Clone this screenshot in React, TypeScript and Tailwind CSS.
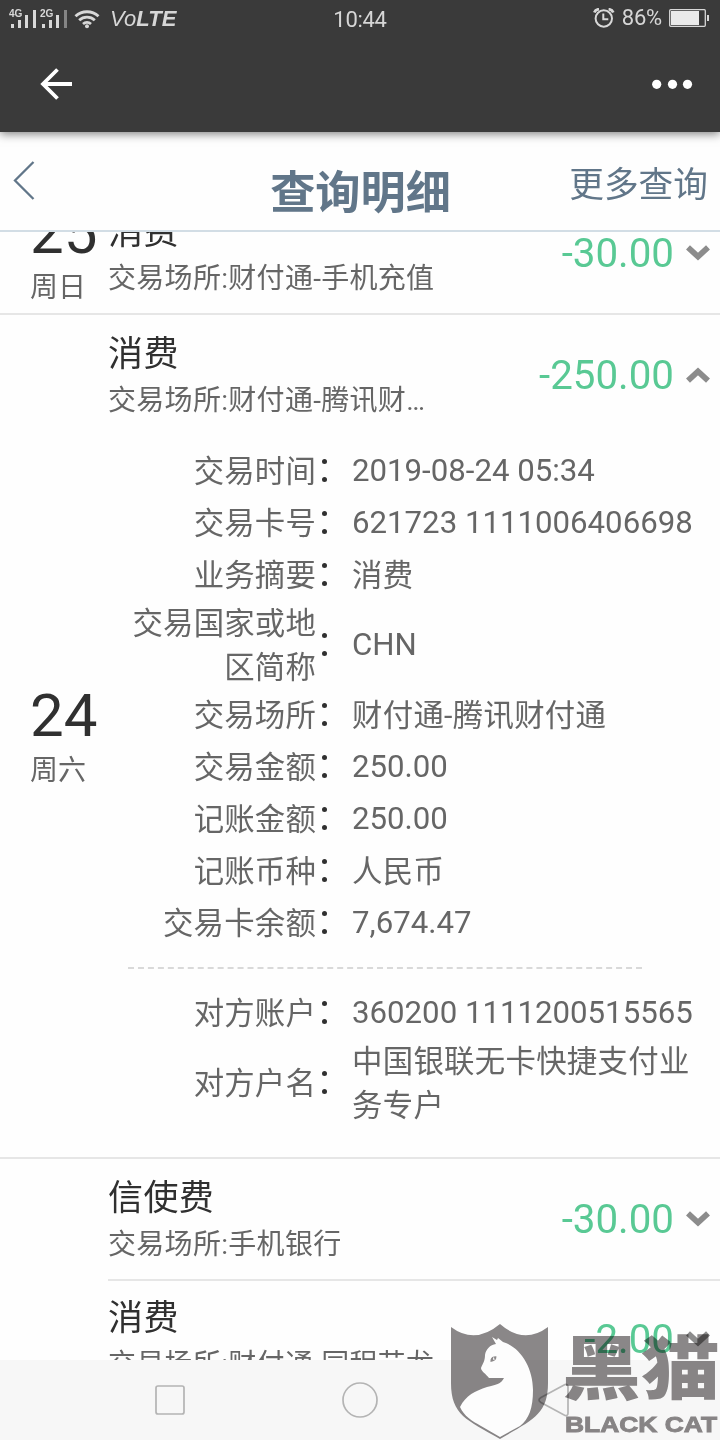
import React from "react";

type Detail = { label: string; value: string };

const tradeDetails: Detail[] = [
  { label: "交易时间", value: "2019-08-24 05:34" },
  { label: "交易卡号", value: "621723 1111006406698" },
  { label: "业务摘要", value: "消费" },
  { label: "交易国家或地区简称", value: "CHN" },
  { label: "交易场所", value: "财付通-腾讯财付通" },
  { label: "交易金额", value: "250.00" },
  { label: "记账金额", value: "250.00" },
  { label: "记账币种", value: "人民币" },
  { label: "交易卡余额", value: "7,674.47" },
];

const partyDetails: Detail[] = [
  { label: "对方账户", value: "360200 1111200515565" },
  { label: "对方户名", value: "中国银联无卡快捷支付业务专户" },
];

function Chevron({ up = false }: { up?: boolean }) {
  return (
    <svg width="24" height="16" viewBox="0 0 24 16" fill="none" stroke="#8c8c8c" strokeWidth="5.8">
      <path d={up ? "M2 13.6 12 4.4l10 9.2" : "M2 2.4 12 11.6l10-9.2"} />
    </svg>
  );
}

function Signal({ label, weak = false }: { label: string; weak?: boolean }) {
  return (
    <svg width="29" height="20" viewBox="0 0 29 20" fill="#d8d8d8">
      <text x="0" y="8" fontSize="10.4" fontWeight="700" fontFamily="Liberation Sans, sans-serif" textLength="13.5" lengthAdjust="spacingAndGlyphs">
        {label}
      </text>
      <rect x="2" y="15" width="3" height="4" />
      <rect x="9" y="11" width="3" height="8" />
      <rect x="16" y="6" width="3" height="13" />
      <rect x="24" y="1" width="3" height="18" fill={weak ? "#858585" : "#d8d8d8"} />
    </svg>
  );
}

function StatusBar() {
  return (
    <div className="grid h-9 grid-cols-[1fr_auto_1fr] items-center text-[22px] leading-8 text-[#d6d6d6]">
      <div className="flex items-center pl-[9px] pt-[2px]">
        <div className="flex gap-[2px]">
          <Signal label="4G" />
          <Signal label="2G" weak />
        </div>
        <svg className="ml-[5px]" width="27" height="20" viewBox="0 0 27 20" fill="none" stroke="#d8d8d8" strokeWidth="2.9">
          <path d="M1.5 7.2a17 17 0 0 1 23 0M5.2 11.2a11.5 11.5 0 0 1 15.6 0M9 15a6.2 6.2 0 0 1 8 0" />
          <circle cx="13" cy="17.2" r="2" fill="#d8d8d8" stroke="none" />
        </svg>
        <div className="ml-[9px] font-['Liberation_Sans',sans-serif] text-[22px] italic tracking-[0.1px]">
          Vo<span className="font-bold">LTE</span>
        </div>
      </div>
      <div className="pt-[3px] tracking-[-0.3px]">10:44</div>
      <div className="flex items-center justify-end pr-[11px]">
        <svg width="22" height="20" viewBox="0 0 22 20" fill="none" stroke="#d8d8d8" strokeWidth="2">
          <circle cx="10.8" cy="10.5" r="8.2" />
          <path d="M10.3 5.5v5.7h5" />
          <path d="M1.3 4.5Q2.5 1.5 6 1.2M20.3 4.5Q19 1.5 15.6 1.2" strokeWidth="2.8" />
        </svg>
        <span className="ml-[7px] pb-px tracking-[-0.2px]">86%</span>
        <svg className="ml-[7px]" width="40" height="18" viewBox="0 0 40 18">
          <rect x="0.7" y="0.7" width="35.6" height="16.6" rx="1" fill="none" stroke="#d8d8d8" strokeWidth="1.3" />
          <rect x="2" y="2" width="28" height="14" fill="#eaeaea" />
          <rect x="38" y="6" width="2" height="6" fill="#d8d8d8" />
        </svg>
      </div>
    </div>
  );
}

function Row({ title, place, amount, open = false }: { title: string; place: string; amount: string; open?: boolean }) {
  return (
    <div className="flex h-[120px] shrink-0 items-center pr-[10px]">
      <div className="w-[329px] shrink-0 pt-[6px]">
        <div className="h-[46px] text-[35px] leading-[46px] tracking-[0.4px] text-[#303030]">{title}</div>
        <div className="h-[46px] truncate text-[28px] leading-[46px] tracking-[0.3px] text-[#666]">{place}</div>
      </div>
      <div className="flex-1 pt-0.5 text-right text-[40.3px] leading-[48px] text-[#59c994]">{amount}</div>
      <div className="ml-[12px]">
        <Chevron up={open} />
      </div>
    </div>
  );
}

function DateCell({ day, week }: { day: string; week: string }) {
  return (
    <div className="flex w-[108px] shrink-0 flex-col justify-center pl-[30px] pt-[8px]">
      <div className="text-[60px] leading-[60px] text-[#303030]">{day}</div>
      <div className="pt-[2px] text-[28px] leading-[46px] text-[#666]">{week}</div>
    </div>
  );
}

function DetailRow({ label, value }: Detail) {
  const latin = /^[\x20-\x7e]+$/.test(value);
  return (
    <div className="flex min-h-[52px] items-center text-[30.4px] leading-[44px] text-[#666]">
      <div className="-mb-[2px] w-[208px] shrink-0 pl-[20px] pt-[2px] text-right tracking-[0.2px]">{label}</div>
      <div className="flex w-[36px] shrink-0 flex-col items-start gap-[13px] pl-[6px]">
        <span className="size-[5px] rounded-full bg-[#303030]" />
        <span className="size-[5px] rounded-full bg-[#303030]" />
      </div>
      <div className={latin ? "-mb-px w-[348px] pt-px text-[31.2px]" : "-mb-[2px] w-[348px] pt-[2px] tracking-[0.3px]"}>
        {value}
      </div>
    </div>
  );
}

function Watermark() {
  return (
    <div className="pointer-events-none absolute bottom-0 right-0 h-[116px] w-[270px]">
      <svg className="mix-blend-multiply" width="270" height="116" viewBox="0 0 270 116" fill="#8b8889">
        <path d="M1 3Q25 21 50 0Q74 21 98 3V59C98 91 82 96 50 115C17 96 1 91 1 59Z" />
        <g transform="translate(0 6) scale(1 0.91)">
          <text x="112" y="70" fontSize="76" fontWeight="900" fontFamily="Noto Sans CJK SC, sans-serif" textLength="158" lengthAdjust="spacingAndGlyphs">
            黑猫
          </text>
        </g>
        <text x="115" y="107.500" fontSize="22.5" fontWeight="700" fontFamily="Liberation Sans, sans-serif" stroke="#8b8889" strokeWidth="0.9" textLength="152" lengthAdjust="spacingAndGlyphs">
          BLACK CAT
        </text>
      </svg>
      <svg className="absolute inset-0" width="270" height="116" viewBox="0 0 270 116">
        <path
          fill="#fdfdfd"
          d="M42 13L47 16L48 14L53 18C70 23 83 43 83 66C83 84 79 95 70 102L50 113L31 102C22 97 14 92 10 83C16 71 25 67 37 63C46 61 51 60 54 54H39C36 50 31 47 31 44C33 39 35 37 35 31C36 25 40 21 46 20Z"
        />
        <path d="M40.500 38Q40 33 44 32.500Q46.500 32 46.500 32.500Q46.500 37 40.500 38Z" fill="#8b8889" />
        <path d="M43.500 33.500L44 36" stroke="#fdfdfd" strokeWidth="1.200" />
      </svg>
    </div>
  );
}

export default function App() {
  return (
    <div className="relative flex h-[1440px] w-[720px] flex-col overflow-hidden bg-[#fefefe] font-[Roboto,'Noto_Sans_CJK_SC',sans-serif]">
      <header className="z-10 h-[132px] shrink-0 bg-[#3a3a3a] shadow-[0_2px_9px_rgba(0,0,0,0.5)]">
        <StatusBar />
        <div className="flex h-24 items-center justify-between pl-10 pr-[26px]">
          <svg width="33" height="34" viewBox="0 0 33 34" fill="none" stroke="#fff" strokeWidth="3.8">
            <path d="M17.5 2.5 3 17l14.500 14.500M3 17h29" />
          </svg>
          <svg width="42" height="10" viewBox="0 0 42 10" fill="#fff">
            <circle cx="4.700" cy="5.300" r="4.600" />
            <circle cx="20.500" cy="5.300" r="4.600" />
            <circle cx="35.500" cy="5.300" r="4.600" />
          </svg>
        </div>
      </header>

      <div className="grid h-[100px] shrink-0 grid-cols-[1fr_auto_1fr] items-center border-b-2 border-[#d2dde5] text-[#617689]">
        <svg className="-mt-0.5 ml-[13px]" width="23" height="40" viewBox="0 0 23 40" fill="none" stroke="#617689" strokeWidth="2.3">
          <path d="M20.500 2 2 20.500 20.500 39" />
        </svg>
        <h1 className="pl-px pt-[25px] text-[45.2px] font-bold leading-[60px]">查询明细</h1>
        <div className="pr-[12px] pt-[7px] text-right text-[34.7px] leading-[48px]">更多查询</div>
      </div>

      <main className="flex h-[1128px] shrink-0 flex-col overflow-hidden">
        <div className="-mt-[39px] flex h-[122px] shrink-0 border-b-2 border-[#e6e6e6]">
          <DateCell day="25" week="周日" />
          <div className="flex-1">
            <Row title="消费" place="交易场所:财付通-手机充值" amount="-30.00" />
          </div>
        </div>

        <div className="flex h-[844px] shrink-0 border-b-2 border-[#e6e6e6]">
          <DateCell day="24" week="周六" />
          <div className="flex-1">
            <Row title="消费" place="交易场所:财付通-腾讯财付通" amount="-250.00" open />
            <div className="pt-[9px]">
              {tradeDetails.map((d) => (
                <DetailRow key={d.label} {...d} />
              ))}
            </div>
            <div className="ml-5 mt-[19px] w-[514px] border-t-2 border-dashed border-[#d9d9d9]" />
            <div className="pt-[17px]">
              {partyDetails.map((d) => (
                <DetailRow key={d.label} {...d} />
              ))}
            </div>
          </div>
        </div>

        <div className="flex shrink-0 flex-col pl-[108px]">
          <div className="border-b-2 border-[#e6e6e6]">
            <Row title="信使费" place="交易场所:手机银行" amount="-30.00" />
          </div>
          <div className="-mt-[2px]">
            <Row title="消费" place="交易场所:财付通-同程艺龙" amount="-2.00" />
          </div>
        </div>
      </main>

      <nav className="flex h-20 shrink-0 items-center bg-[#f7f7f7] pl-[155px]">
        <svg width="415" height="36" viewBox="0 0 415 36" fill="none" stroke="#b4b4b4" strokeWidth="1.700">
          <rect x="1" y="4" width="28" height="28" rx="2" />
          <circle cx="205" cy="18" r="17" />
          <path d="M410 2.500 386 15.500Q382 18 386 20.500L410 33.500Q413 34 413 31V5Q413 2 410 2.500Z" />
        </svg>
      </nav>
      <Watermark />
    </div>
  );
}
